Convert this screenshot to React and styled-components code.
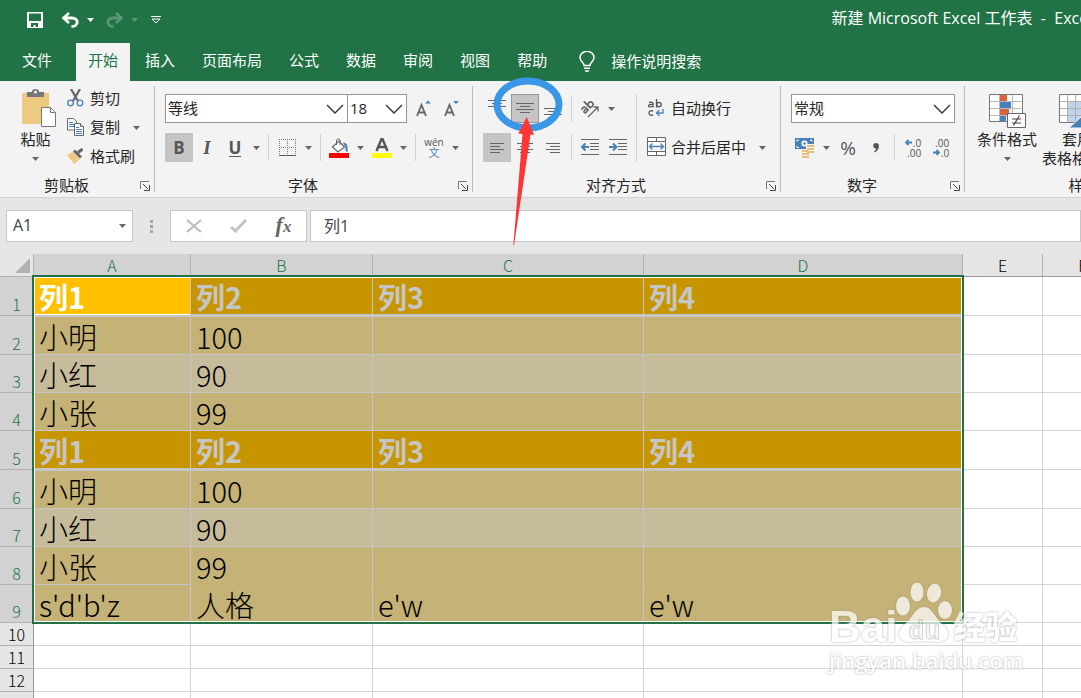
import React from "react";
import styled, { createGlobalStyle } from "styled-components";

const GlobalStyle = createGlobalStyle`
    * { box-sizing:border-box; }
    body {
        margin:0;
        font-family:"Open Sans", "Noto Sans CJK SC", sans-serif;
        font-size:15px;
        color:#262626;
        background:#ffffff;
    }
    button, input, select {
        font:inherit; color:inherit;
        margin:0; padding:0; border:0;
        background:none;
    }
    svg { display:block; flex:none; }
`;

const Page = styled.div`
    position:relative;
    min-height:100vh;
    overflow:hidden;
    display:flex;
    flex-direction:column;
`;

/* ---------- title and tabs ---------- */

const TitleBar = styled.header`
    height:43px;
    padding-bottom:4px;
    background:#217346;
    color:#ffffff;
    display:grid;
    grid-template-columns:10fr 3fr;
    align-items:center;
    overflow:hidden;
`;

const QuickAccess = styled.div`
    display:flex;
    align-items:center;
    min-width:0;
    padding-left:26px;
`;

const QuickButton = styled.button`
    width:${props => props.$wide ? "26px" : "18px"};
    height:28px;
    display:flex;
    align-items:center;
    justify-content:center;
    opacity:${props => props.disabled ? 0.25 : 1};
    margin-right:${props => props.$gap || 0}px;
`;

const Title = styled.div`
    min-width:0;
    white-space:pre;
    font-size:16px;
    line-height:22px;
    padding-bottom:4px;
`;

const Tabs = styled.nav`
    height:38px;
    background:#217346;
    display:flex;
    gap:3px;
    overflow:hidden;
`;

const Tab = styled.button`
    flex:none;
    padding:${props => props.$file ? "0 21px 5px 22px" : "0 12px 5px"};
    line-height:20px;
    color:${props => props.$active ? "#217346" : "#ffffff"};
    background:${props => props.$active ? "#f3f3f3" : "transparent"};
`;

const TellMe = styled.button`
    flex:none;
    display:flex;
    align-items:center;
    gap:16px;
    padding:0 0 2px 17px;
    color:#ffffff;
    line-height:20px;
`;

/* ---------- ribbon ---------- */

const Ribbon = styled.section`
    height:117px;
    background:#f3f3f3;
    border-bottom:1px solid #d2d2d2;
    display:flex;
    overflow:hidden;
`;

const Group = styled.div`
    flex:none;
    width:${props => props.$width}px;
    display:flex;
    flex-direction:column;
`;

const GroupDivider = styled.div`
    flex:none;
    width:1px;
    margin:5px 0;
    background:#bdbdbd;
`;

const GroupBody = styled.div`
    height:94px;
    display:flex;
    padding:${props => props.$tight ? "3px 4px 0" : "13px 10px 0"};
`;

const GroupFooter = styled.div`
    display:flex;
    height:20px;
    line-height:20px;
    padding-right:4px;
`;

const GroupName = styled.div`
    flex:1;
    text-align:center;
    padding-right:7px;
`;

const Launcher = styled.button`
    width:10px;
    height:22px;
    display:flex;
    align-items:center;
`;

const Stack = styled.div`
    display:flex;
    flex-direction:column;
    gap:${props => props.$gap || 0}px;
    width:${props => props.$width ? props.$width + "px" : "auto"};
`;

const Row = styled.div`
    height:29px;
    display:flex;
    align-items:center;
`;

const Sep = styled.div`
    flex:none;
    width:1px;
    height:${props => props.$tall ? "68px" : "27px"};
    margin:0 4px;
    background:#d2d2d2;
`;

const ToolButton = styled.button`
    flex:none;
    width:28px;
    height:29px;
    display:flex;
    align-items:center;
    justify-content:center;
    background:${props => props.$on ? "#c5c5c5" : "transparent"};
    border:${props => props.$framed ? "1px solid #969696" : "0"};
    color:#555555;
    line-height:20px;
    font-size:${props => props.$large ? "19px" : "17px"};
    font-weight:${props => props.$bold ? 700 : 400};
    font-style:${props => props.$italic ? "italic" : "normal"};
    font-family:${props => props.$italic ? "\"Liberation Serif\", serif" : "inherit"};
`;

const Underlined = styled.span`
    border-bottom:1px solid #555555;
    line-height:17px;
`;

const CaretButton = styled.button`
    flex:none;
    width:${props => props.$wide ? "20px" : "15px"};
    height:29px;
    display:flex;
    align-items:center;
    justify-content:center;
`;

const TextButton = styled.button`
    flex:none;
    height:29px;
    display:flex;
    align-items:center;
    gap:6px;
    padding-bottom:2px;
    line-height:20px;
    white-space:nowrap;
`;

const ButtonRow = styled(Row)`
    gap:9px;
`;

const BigButton = styled.button`
    flex:none;
    width:${props => props.$width}px;
    padding-top:${props => props.$drop ? "5px" : "0"};
    display:flex;
    flex-direction:column;
    align-items:center;
    line-height:18px;
    white-space:nowrap;
`;

const BigIcon = styled.span`
    height:${props => props.$high ? "41px" : "36px"};
    display:flex;
    align-items:flex-start;
`;

const BigCaret = styled.span`
    height:21px;
    display:flex;
    align-items:center;
`;

const CaretLine = styled.span`
    display:flex;
    align-items:center;
    gap:3px;
    line-height:20px;
`;

const SelectBox = styled.div`
    position:relative;
    flex:none;
    width:${props => props.$width}px;
    height:29px;
    background:#ffffff;
    border:1px solid #969696;
    & + & { margin-left:-1px; margin-right:2px; }
    select {
        appearance:none;
        width:100%; height:27px;
        padding:0 0 2px 2px;
        color:#262626;
    }
    svg {
        position:absolute;
        right:3px; top:9px;
        pointer-events:none;
    }
`;

/* ---------- formula bar ---------- */

const FormulaBar = styled.section`
    height:56px;
    padding:12px 0 12px 6px;
    background:#e6e6e6;
    display:flex;
`;

const BarBox = styled.div`
    flex:${props => props.$width ? "none" : "1"};
    width:${props => props.$width ? props.$width + "px" : "auto"};
    background:#ffffff;
    border:1px solid #c6c6c6;
    display:flex;
    align-items:center;
    justify-content:${props => props.$spread ? "space-around" : "flex-start"};
    color:#444444;
    input {
        flex:1;
        min-width:0;
        height:30px;
        padding:0 0 2px ${props => props.$width ? "6px" : "13px"};
        font-size:16px;
        outline:0;
    }
`;

const BarButton = styled.button`
    width:40px;
    height:28px;
    display:flex;
    align-items:center;
    justify-content:center;
`;

const Fx = styled.span`
    font-family:"Liberation Serif", serif;
    font-style:italic;
    font-weight:700;
    font-size:22px;
    line-height:24px;
    color:#666666;
    sub { font-size:17px; vertical-align:baseline; }
`;

const Grip = styled.div`
    flex:none;
    width:37px;
    display:flex;
    flex-direction:column;
    align-items:center;
    justify-content:center;
    gap:2px;
    i {
        width:3px; height:3px;
        background:#a6a6a6;
    }
`;

const Gap = styled.div`
    flex:none;
    width:3px;
`;

/* ---------- sheet ---------- */

const Sheet = styled.main`
    position:relative;
    flex:1;
    background:#ffffff;
    font-family:"Noto Sans CJK SC", sans-serif;
    font-weight:300;
`;

const Table = styled.table`
    table-layout:fixed;
    width:1123px;
    border-collapse:separate;
    border-spacing:0;
    th, td { padding:0; }
`;

const Corner = styled.th`
    height:23px;
    background:#e6e6e6;
    border-right:1px solid #b1b1b1;
    border-bottom:1px solid #b1b1b1;
    svg { margin-left:15px; }
`;

const ColHead = styled.th`
    height:23px;
    font-size:16px;
    font-weight:300;
    line-height:22px;
    color:${props => props.$on ? "#217346" : "#000000"};
    background:${props => props.$on ? "#d2d2d2" : "#e6e6e6"};
    border-right:1px solid #b1b1b1;
    border-bottom:1px solid #999999;
`;

const RowHead = styled.th`
    height:${props => props.$height}px;
    font-size:16px;
    font-weight:300;
    line-height:22px;
    vertical-align:bottom;
    color:${props => props.$on ? "#217346" : "#000000"};
    background:${props => props.$on ? "#d2d2d2" : "#e6e6e6"};
    border-right:1px solid #999999;
    border-bottom:1px solid #b1b1b1;
`;

const fills = {
    head: "#c69500",
    dark: "#c5b276",
    light: "#c6bc9c",
    active: "#ffc000",
    none: "#ffffff",
};

const Cell = styled.td`
    font-size:29px;
    line-height:34px;
    font-weight:${props => props.$bold ? 700 : 300};
    color:${props => props.$color};
    background:${props => fills[props.$fill]};
    border-right:1px solid ${props => props.$line};
    border-bottom:${props => props.$thick ? 2 : 1}px solid ${props => props.$open ? "transparent" : props.$line};
    border-top:${props => props.$under ? "1px solid #c6c6c6" : "0"};
    box-shadow:${props => props.$fill === "active" ? "inset 0 -1px 0 #ffffff" : "none"};
    overflow:hidden;
    white-space:nowrap;
    && { padding-left:5px; }
`;

const Selection = styled.div`
    position:absolute;
    left:32px; top:21px;
    width:932px; height:349px;
    border:2px solid #217346;
    box-shadow:inset 0 0 0 1px #ffffff;
    pointer-events:none;
`;

/* ---------- things lying over the page ---------- */

const Pointer = styled.svg`
    position:absolute;
    left:490px; top:75px;
    pointer-events:none;
`;

const Watermark = styled.div`
    position:absolute;
    left:829px; top:577px;
    width:200px;
    color:#ffffff;
    opacity:0.72;
    font-family:"Liberation Sans", "Noto Sans CJK SC", sans-serif;
    font-weight:700;
    filter:drop-shadow(0 0 1px #8c8c8c);
    pointer-events:none;
`;

const WatermarkLogo = styled.div`
    display:flex;
    align-items:flex-end;
    height:70px;
    span {
        font-size:44px;
        line-height:40px;
    }
    b {
        font-size:32px;
        line-height:38px;
        white-space:nowrap;
    }
`;

const Paw = styled.div`
    position:relative;
    width:58px; height:68px;
    margin-left:-2px;
    em {
        position:absolute;
        left:0; right:0; bottom:4px;
        text-align:center;
        font-style:normal;
        font-size:26px;
        line-height:26px;
        color:#f6f6f6;
        -webkit-text-stroke:1px #c4c4c4;
    }
`;

const WatermarkUrl = styled.div`
    font-family:"Open Sans", sans-serif;
    font-weight:600;
    font-size:22px;
    line-height:26px;
`;

/* ---------- icons ---------- */

const Caret = ({ color = "#666666" }) => (
    <svg width="7" height="4" viewBox="0 0 7 4"><path d="M0 0h7L3.5 4z" fill={color} /></svg>
);

const Chevron = () => (
    <svg width="18" height="10" viewBox="0 0 18 10">
        <path d="M1 1l8 8 8-8" fill="none" stroke="#333333" strokeWidth="1.4" />
    </svg>
);

const SaveIcon = () => (
    <svg width="16" height="16" viewBox="0 0 16 16">
        <path fill="#ffffff" fillRule="evenodd" d="M0 0h16v16H0zM2 1.500h12V9H2zM4 11v4h2.500v-2h2v2H11v-4z" />
    </svg>
);

const UndoIcon = ({ flip }) => (
    <svg width="19" height="16" viewBox="0 0 19 16">
        <g transform={flip ? "translate(19 0) scale(-1 1)" : undefined} fill="none" stroke="#ffffff">
            <path d="M2 6h9c7 0 7 8.500-.5 8.500" strokeWidth="2.800" />
            <path d="M8 1L2.500 6 8 11" strokeWidth="2.600" />
        </g>
    </svg>
);

const CustomizeIcon = () => (
    <svg width="10" height="8" viewBox="0 0 10 8">
        <path d="M0 .5h10M1 3h8L5 7z" fill="none" stroke="#ffffff" />
    </svg>
);

const BulbIcon = () => (
    <svg width="16" height="21" viewBox="0 0 16 21" fill="none" stroke="#ffffff" strokeWidth="1.500">
        <path d="M5 14.500c0-3-4-4-4-8A6.500 5.800 0 0 1 15 6.500c0 4-4 5-4 8z" />
        <path d="M5 17.300h6M6 20h4" />
    </svg>
);

const LauncherIcon = () => (
    <svg width="10" height="10" viewBox="0 0 10 10" fill="none" stroke="#777777">
        <path d="M.5 8V.5H9" />
        <path d="M3 3l5 5M9.500 4v5.500H4" stroke="#444444" />
    </svg>
);

const PasteIcon = () => (
    <svg width="40" height="38" viewBox="-6 0 40 38">
        <path d="M0 4h27v31H0z" fill="#eec981" />
        <path d="M5 3h5V1.500Q11 0 13.500 0T17 1.500V3h5v5H5z" fill="#777777" />
        <circle cx="13.500" cy="3" r="1.500" fill="#f3f3f3" />
        <path d="M19.500 18.500h9l5 5v14h-14z" fill="#ffffff" stroke="#777777" />
        <path d="M28.500 18.500v5h5" fill="none" stroke="#777777" />
    </svg>
);

const CutIcon = () => (
    <svg width="17" height="18" viewBox="0 0 17 18" fill="none">
        <path d="M4 0l7 12M13 0L6 12" stroke="#666666" strokeWidth="2.200" />
        <circle cx="3.500" cy="14" r="2.800" stroke="#4a80ba" strokeWidth="1.300" />
        <circle cx="13" cy="14" r="2.800" stroke="#4a80ba" strokeWidth="1.300" />
    </svg>
);

const CopyIcon = () => (
    <svg width="17" height="18" viewBox="0 0 17 18" fill="#ffffff" stroke="#666666">
        <path d="M.5.5h6l3 3v8.500h-9z" />
        <path d="M2 4.500h4M2 6.500h5M2 8.500h5" stroke="#4a80ba" />
        <path d="M7.500 5.500h6l3 3v9h-9z" />
        <path d="M13.500 5.500v3h3" />
        <path d="M9 9.500h3M9 11.500h6M9 13.500h6M9 15.500h6" stroke="#4a80ba" />
    </svg>
);

const BrushIcon = () => (
    <svg width="17" height="16" viewBox="0 0 17 16">
        <path d="M0 7l6-3 7 7-6 5z" fill="#eec981" />
        <path d="M6 3.500l2-2 7 7-2 2z" fill="#666666" />
        <path d="M11 4.500L15.500 1" stroke="#666666" strokeWidth="3" />
    </svg>
);

const SizeIcon = ({ down }) => (
    <svg width="15" height="17" viewBox="0 0 15 17">
        <path d="M1 16L5.500 5 10 16M2.500 12.500h6" fill="none" stroke="#666666" strokeWidth="1.800" />
        <path d={down ? "M9 1h6l-3 3z" : "M9 3.500h6l-3-3z"} fill="#4a80ba" />
    </svg>
);

const BordersIcon = () => (
    <svg width="17" height="17" viewBox="0 0 17 17" fill="none" stroke="#777777">
        <path d="M0 .5h17M0 8.500h17M.5 0v15M8.500 0v15M16.500 0v15" strokeDasharray="1 1" />
        <path d="M0 16.500h17" stroke="#555555" />
    </svg>
);

const FillIcon = () => (
    <svg width="20" height="20" viewBox="0 0 20 20">
        <path d="M3.500 9L10 3l5.500 6L9 14z" fill="#ffffff" stroke="#666666" strokeWidth="1.200" />
        <path d="M7.500 7V2q1.500-2.500 3.500 0v5" fill="none" stroke="#666666" />
        <path d="M14 5c4-1 5 3 4.500 9C17 14 16 12 16.500 9z" fill="#4a80ba" />
        <path d="M0 15h20v5H0z" fill="#ff0000" />
    </svg>
);

const FontColorIcon = () => (
    <svg width="20" height="20" viewBox="0 0 20 20">
        <path d="M4.500 13L9.500 1h1l5 12M6.500 9h7" fill="none" stroke="#555555" strokeWidth="2.400" />
        <path d="M0 15h20v5H0z" fill="#ffff00" />
    </svg>
);

const Phonetic = styled.span`
    display:flex;
    flex-direction:column;
    align-items:center;
    font-size:10px;
    line-height:10px;
    color:#555555;
    span { font-size:11px; color:#4a80ba; line-height:11px; }
`;

const LinesIcon = ({ lines, width = 18, height = 18 }) => (
    <svg width={width} height={height} viewBox={`0 0 ${width} ${height}`}>
        {lines.map(([x, y, w], i) => <path key={i} d={`M${x} ${y + 0.5}h${w}`} stroke="#666666" />)}
    </svg>
);

const topLines = [[0, 0, 18], [4, 3, 10], [0, 6, 18]];
const middleLines = [[0, 3, 18], [4, 6, 10], [0, 9, 18], [4, 12, 10]];
const bottomLines = [[0, 8, 18], [4, 11, 10], [0, 14, 18], [4, 17, 10]];
const leftLines = [[0, 0, 14], [0, 3, 10], [0, 6, 14], [0, 9, 10]];
const centerLines = [[0, 0, 16], [3, 3, 10], [0, 6, 16], [3, 9, 10]];
const rightLines = [[0, 0, 14], [4, 3, 10], [0, 6, 14], [4, 9, 10]];

const OrientationIcon = () => (
    <svg width="20" height="20" viewBox="0 0 20 20">
        <g transform="rotate(-45 8 8)" fill="none" stroke="#666666" strokeWidth="1.600">
            <path d="M1.500 5.500q4-1.500 4.500 1V11M6 8q-5-.5-4.500 1.500T6 9.500" />
            <path d="M9 1v10" />
            <circle cx="11.600" cy="8" r="2.500" />
        </g>
        <path d="M8 18L18 8M13.500 8H18v4.500" fill="none" stroke="#666666" strokeWidth="1.300" />
    </svg>
);

const IndentIcon = ({ right }) => (
    <svg width="18" height="17" viewBox="0 0 18 17">
        <path d="M0 .5h18M9 4.500h9M9 7.500h9M9 10.500h9M0 15.500h18" stroke="#666666" />
        <path
            d={right ? "M0 8h7M4 4.500L7.500 8 4 11.500" : "M8 8H1M4.500 4.500L1 8l3.500 3.500"}
            fill="none" stroke="#4a80ba" strokeWidth="2"
        />
    </svg>
);

const WrapIcon = () => (
    <svg width="18" height="18" viewBox="0 0 18 18" fill="none" stroke="#555555" strokeWidth="1.300">
        <path d="M2 3.500q4-1 4 1.200V8.500M6 5.500q-4.500-.3-4.500 1.500T6 7" />
        <path d="M9.500 0v8.500M6 16q-4 1-4-2t4-2" />
        <circle cx="12" cy="5.500" r="2.200" />
        <path d="M16 10v4H10M12.500 11L9.500 14l3 3" stroke="#4a80ba" />
    </svg>
);

const MergeIcon = () => (
    <svg width="19" height="19" viewBox="0 0 19 19" fill="none" stroke="#666666">
        <path d="M.5.5h18v18H.5z" fill="#ffffff" />
        <path d="M0 4.500h19M0 14.500h19M9.500 0v4M9.500 15v4" />
        <path d="M3 9.500h13M5.500 6.500l-3 3 3 3M13.500 6.500l3 3-3 3" stroke="#4a80ba" strokeWidth="1.400" />
    </svg>
);

const MoneyIcon = () => (
    <svg width="20" height="20" viewBox="0 0 20 20">
        <path d="M0 0h19v11H0z" fill="#4a80ba" />
        <path d="M2 3.500V2h2M15 2h2v1.500M2 8v1.500h2" fill="none" stroke="#ffffff" />
        <circle cx="9.500" cy="5.500" r="3" fill="#ffffff" />
        <circle cx="9.500" cy="5.500" r="1.300" fill="#4a80ba" />
        <path d="M11 6h9v11h-5v3H6v-9h5z" fill="#f3f3f3" />
        <path d="M12 8h7M12 11h7M12 14h7M7 13h6M7 16h7M7 19h7" stroke="#e8bf73" strokeWidth="2" />
    </svg>
);

const CommaIcon = () => (
    <svg width="7" height="10" viewBox="0 0 7 10">
        <path d="M3 0a3 3 0 0 1 3 3c0 3-2 5-4 6.500L1 8.500C3 7 3 6 3 5.500A2.700 2.700 0 0 1 3 0z" fill="#555555" />
    </svg>
);

const Decimals = styled.span`
    display:flex;
    flex-direction:column;
    align-items:flex-end;
    font-size:10px;
    line-height:10px;
    span { display:flex; align-items:center; gap:1px; }
`;

const SmallArrow = ({ right }) => (
    <svg width="7" height="7" viewBox="0 0 7 7">
        <path
            d={right ? "M0 3.500h6M3.500 1L6 3.500 3.500 6" : "M7 3.500H1M3.500 1L1 3.500 3.500 6"}
            fill="none" stroke="#4a80ba" strokeWidth="1.800"
        />
    </svg>
);

const ConditionalIcon = () => (
    <svg width="37" height="34" viewBox="0 0 37 34">
        <path d="M.5.5h33v27H.5z" fill="#ffffff" stroke="#777777" />
        <path d="M11 1h7v6h-7zM11 15h9v6h-9z" fill="#db6140" />
        <path d="M11 8h11v6H11zM11 22h6v5h-6z" fill="#4a80ba" />
        <path d="M1 7.500h32M1 14.500h32M1 21.500h32M10.500 1v26M23.500 1v26" stroke="#b8b8b8" fill="none" />
        <path d="M18.500 19.500h18v14h-18z" fill="#ffffff" stroke="#666666" />
        <path d="M23 25h9M23 29h9M30.500 21.500l-6 10" stroke="#444444" strokeWidth="1.200" />
    </svg>
);

const FormatTableIcon = () => (
    <svg width="36" height="35" viewBox="0 0 36 35">
        <path d="M.5.5h32v28H.5z" fill="#ffffff" stroke="#777777" />
        <path d="M9 8h24v20H9z" fill="#c1d3ea" />
        <path d="M1 7.500h32M1 14.500h32M1 21.500h32M8.500 1v27M16.500 1v27M24.500 1v27" stroke="#b0b0b0" fill="none" />
        <path d="M10 34l12-11 8 4v7z" fill="#4a80ba" stroke="#f3f3f3" />
    </svg>
);

const PawIcon = () => (
    <svg width="58" height="66" viewBox="0 0 58 66" fill="#ffffff">
        <ellipse cx="8" cy="27" rx="7" ry="9.500" />
        <ellipse cx="22" cy="13" rx="6.500" ry="9.500" />
        <ellipse cx="39" cy="14" rx="7" ry="9.500" transform="rotate(12 39 14)" />
        <ellipse cx="50" cy="31" rx="7" ry="9" />
        <path d="M29 28c9 0 12 13 19 18 10 9 4 18-7 17-8-1-16-1-24 0C4 64 0 55 9 46c8-6 11-18 20-18z" />
    </svg>
);

/* ---------- data ---------- */

const tabs = ["开始", "插入", "页面布局", "公式", "数据", "审阅", "视图", "帮助"];

const columns = [
    { name: "A", width: 157 },
    { name: "B", width: 182 },
    { name: "C", width: 271 },
    { name: "D", width: 319 },
    { name: "E", width: 80 },
    { name: "F", width: 80 },
];

const rows = [
    { fill: "head", height: 39, cells: ["列1", "列2", "列3", "列4"] },
    { fill: "dark", height: 39, cells: ["小明", "100", "", ""] },
    { fill: "light", height: 38, cells: ["小红", "90", "", ""] },
    { fill: "dark", height: 38, cells: ["小张", "99", "", ""] },
    { fill: "head", height: 39, cells: ["列1", "列2", "列3", "列4"] },
    { fill: "dark", height: 39, cells: ["小明", "100", "", ""] },
    { fill: "light", height: 38, cells: ["小红", "90", "", ""] },
    { fill: "dark", height: 38, cells: ["小张", "99", "", ""], open: true },
    { fill: "dark", height: 38, cells: ["s'd'b'z", "人格", "e'w", "e'w"] },
    { height: 23 },
    { height: 23 },
    { height: 23 },
    { height: 23 },
];

const DropDown = ({ label, value, width }) => (
    <SelectBox $width={width}>
        <select aria-label={label} defaultValue={value}>
            <option>{value}</option>
        </select>
        <Chevron />
    </SelectBox>
);

const Tool = ({ label, children, ...rest }) => (
    <ToolButton aria-label={label} {...rest}>{children}</ToolButton>
);

const More = ({ label, wide }) => (
    <CaretButton aria-label={label} $wide={wide}><Caret /></CaretButton>
);

const Footer = ({ name, launcher = true }) => (
    <GroupFooter>
        <GroupName>{name}</GroupName>
        {launcher && <Launcher aria-label={name}><LauncherIcon /></Launcher>}
    </GroupFooter>
);

const TextIcon = styled.span`
    width:18px;
    margin-left:6px;
    display:flex;
    justify-content:center;
`;

const SheetRow = ({ row, index }) => {
    const selected = !!row.cells;
    const under = index > 0 && rows[index - 1].fill === "head";
    return (
        <tr>
            <RowHead scope="row" $height={row.height} $on={selected}>{index + 1}</RowHead>
            {columns.map((col, c) => {
                const inside = selected && c < 4;
                const active = index === 0 && c === 0;
                const head = inside && row.fill === "head";
                return (
                    <Cell
                        key={col.name}
                        $fill={active ? "active" : inside ? row.fill : "none"}
                        $color={active ? "#ffffff" : head ? "#c6c6c6" : "#000000"}
                        $bold={head}
                        $thick={head && !active}
                        $under={inside && under}
                        $open={inside && row.open && c > 0}
                        $line={inside ? "#c6c6c6" : "#d4d4d4"}
                    >
                        {inside ? row.cells[c] : null}
                    </Cell>
                );
            })}
        </tr>
    );
};

const App = () => (
    <Page>
        <GlobalStyle />

        <TitleBar>
            <QuickAccess>
                <QuickButton aria-label="保存" $gap={17}><SaveIcon /></QuickButton>
                <QuickButton aria-label="撤消" $gap={2}><UndoIcon /></QuickButton>
                <QuickButton aria-label="撤消列表" $gap={6}><Caret color="#ffffff" /></QuickButton>
                <QuickButton aria-label="恢复" disabled $gap={2}><UndoIcon flip /></QuickButton>
                <QuickButton aria-label="恢复列表" disabled><Caret color="#ffffff" /></QuickButton>
                <QuickButton aria-label="自定义" $wide><CustomizeIcon /></QuickButton>
            </QuickAccess>
            <Title>新建 Microsoft Excel 工作表  -  Excel</Title>
        </TitleBar>

        <Tabs>
            <Tab $file>文件</Tab>
            {tabs.map(name => <Tab key={name} $active={name === "开始"}>{name}</Tab>)}
            <TellMe><BulbIcon />操作说明搜索</TellMe>
        </Tabs>

        <Ribbon>
            <Group $width={154}>
                <GroupBody $tight>
                    <BigButton $width={63} $drop>
                        <BigIcon $high><PasteIcon /></BigIcon>
                        粘贴
                        <BigCaret><Caret /></BigCaret>
                    </BigButton>
                    <Stack>
                        <TextButton><CutIcon />剪切</TextButton>
                        <ButtonRow>
                            <TextButton><CopyIcon />复制</TextButton>
                            <More label="复制选项" />
                        </ButtonRow>
                        <TextButton><BrushIcon />格式刷</TextButton>
                    </Stack>
                </GroupBody>
                <Footer name="剪贴板" />
            </Group>
            <GroupDivider />

            <Group $width={317}>
                <GroupBody>
                    <Stack $gap={10}>
                        <Row>
                            <DropDown label="字体" value="等线" width={183} />
                            <DropDown label="字号" value="18" width={60} />
                            <Tool label="增大字号"><SizeIcon /></Tool>
                            <Tool label="减小字号"><SizeIcon down /></Tool>
                        </Row>
                        <Row>
                            <Tool label="加粗" $on $bold>B</Tool>
                            <Tool label="倾斜" $italic $bold $large>I</Tool>
                            <Tool label="下划线" $bold><Underlined>U</Underlined></Tool>
                            <More label="下划线选项" />
                            <Sep />
                            <Tool label="边框"><BordersIcon /></Tool>
                            <More label="边框选项" />
                            <Sep />
                            <Tool label="填充颜色"><FillIcon /></Tool>
                            <More label="填充颜色选项" />
                            <Tool label="字体颜色"><FontColorIcon /></Tool>
                            <More label="字体颜色选项" />
                            <Sep />
                            <Tool label="拼音"><Phonetic>wén<span>文</span></Phonetic></Tool>
                            <More label="拼音选项" />
                        </Row>
                    </Stack>
                </GroupBody>
                <Footer name="字体" />
            </Group>
            <GroupDivider />

            <Group $width={307}>
                <GroupBody>
                    <Stack $gap={10} $width={150}>
                        <Row>
                            <Tool label="顶端对齐"><LinesIcon lines={topLines} /></Tool>
                            <Tool label="垂直居中" $on $framed><LinesIcon lines={middleLines} /></Tool>
                            <Tool label="底端对齐"><LinesIcon lines={bottomLines} /></Tool>
                            <Sep />
                            <Tool label="方向"><OrientationIcon /></Tool>
                            <More label="方向选项" />
                        </Row>
                        <Row>
                            <Tool label="左对齐" $on><LinesIcon lines={leftLines} width={14} height={10} /></Tool>
                            <Tool label="居中"><LinesIcon lines={centerLines} width={16} height={10} /></Tool>
                            <Tool label="右对齐"><LinesIcon lines={rightLines} width={14} height={10} /></Tool>
                            <Sep />
                            <Tool label="减少缩进量"><IndentIcon /></Tool>
                            <Tool label="增加缩进量"><IndentIcon right /></Tool>
                        </Row>
                    </Stack>
                    <Sep $tall />
                    <Stack $gap={10}>
                        <TextButton><TextIcon><WrapIcon /></TextIcon>自动换行</TextButton>
                        <ButtonRow>
                            <TextButton><TextIcon><MergeIcon /></TextIcon>合并后居中</TextButton>
                            <More label="合并选项" />
                        </ButtonRow>
                    </Stack>
                </GroupBody>
                <Footer name="对齐方式" />
            </Group>
            <GroupDivider />

            <Group $width={183}>
                <GroupBody>
                    <Stack $gap={10}>
                        <DropDown label="数字格式" value="常规" width={164} />
                        <Row>
                            <Tool label="会计数字格式"><MoneyIcon /></Tool>
                            <More label="会计格式选项" />
                            <Tool label="百分比" $large>%</Tool>
                            <Tool label="千位分隔"><CommaIcon /></Tool>
                            <Sep />
                            <Tool label="增加小数位数">
                                <Decimals><span><SmallArrow />.0</span><span>.00</span></Decimals>
                            </Tool>
                            <Tool label="减少小数位数">
                                <Decimals><span>.00</span><span><SmallArrow right />.0</span></Decimals>
                            </Tool>
                        </Row>
                    </Stack>
                </GroupBody>
                <Footer name="数字" />
            </Group>
            <GroupDivider />

            <Group $width={248}>
                <GroupBody>
                    <BigButton $width={64}>
                        <BigIcon><ConditionalIcon /></BigIcon>
                        条件格式
                        <BigCaret><Caret /></BigCaret>
                    </BigButton>
                    <BigButton $width={76}>
                        <BigIcon><FormatTableIcon /></BigIcon>
                        套用
                        <CaretLine>表格格式<Caret /></CaretLine>
                    </BigButton>
                </GroupBody>
                <Footer name="样式" launcher={false} />
            </Group>
        </Ribbon>

        <FormulaBar>
            <BarBox $width={127}>
                <input aria-label="名称框" defaultValue="A1" />
                <More label="名称列表" wide />
            </BarBox>
            <Grip><i /><i /><i /></Grip>
            <BarBox $width={137} $spread>
                <BarButton aria-label="取消">
                    <svg width="16" height="14" viewBox="0 0 16 14">
                        <path d="M1 1l14 12M15 1L1 13" stroke="#bdbdbd" strokeWidth="2.200" />
                    </svg>
                </BarButton>
                <BarButton aria-label="输入">
                    <svg width="17" height="14" viewBox="0 0 17 14">
                        <path d="M1 8l4.500 4L16 1" fill="none" stroke="#c2c2c2" strokeWidth="3" />
                    </svg>
                </BarButton>
                <BarButton aria-label="插入函数"><Fx>f<sub>x</sub></Fx></BarButton>
            </BarBox>
            <Gap />
            <BarBox>
                <input aria-label="编辑栏" defaultValue="列1" />
            </BarBox>
        </FormulaBar>

        <Sheet>
            <Table>
                <colgroup>
                    <col style={{ width: 34 }} />
                    {columns.map(col => <col key={col.name} style={{ width: col.width }} />)}
                </colgroup>
                <thead>
                    <tr>
                        <Corner aria-label="全选">
                            <svg width="15" height="15" viewBox="0 0 15 15"><path d="M15 0v15H0z" fill="#b1b1b1" /></svg>
                        </Corner>
                        {columns.map((col, c) => (
                            <ColHead key={col.name} scope="col" $on={c < 4}>{col.name}</ColHead>
                        ))}
                    </tr>
                </thead>
                <tbody>
                    {rows.map((row, i) => <SheetRow key={i} row={row} index={i} />)}
                </tbody>
            </Table>
            <Selection />
        </Sheet>

        <Pointer width="80" height="175" viewBox="0 0 80 175">
            <ellipse cx="38" cy="29.500" rx="31" ry="23.500" fill="none" stroke="#3a97e8" strokeWidth="7" />
            <path d="M36.700 42L44 60l-3.500-.5L24 170.500h-.7L32.500 59l-4.200-.5z" fill="#fd3635" />
        </Pointer>

        <Watermark>
            <WatermarkLogo>
                <span>Bai</span>
                <Paw><PawIcon /><em>du</em></Paw>
                <b>经验</b>
            </WatermarkLogo>
            <WatermarkUrl>jingyan.baidu.com</WatermarkUrl>
        </Watermark>
    </Page>
);

export default App;
